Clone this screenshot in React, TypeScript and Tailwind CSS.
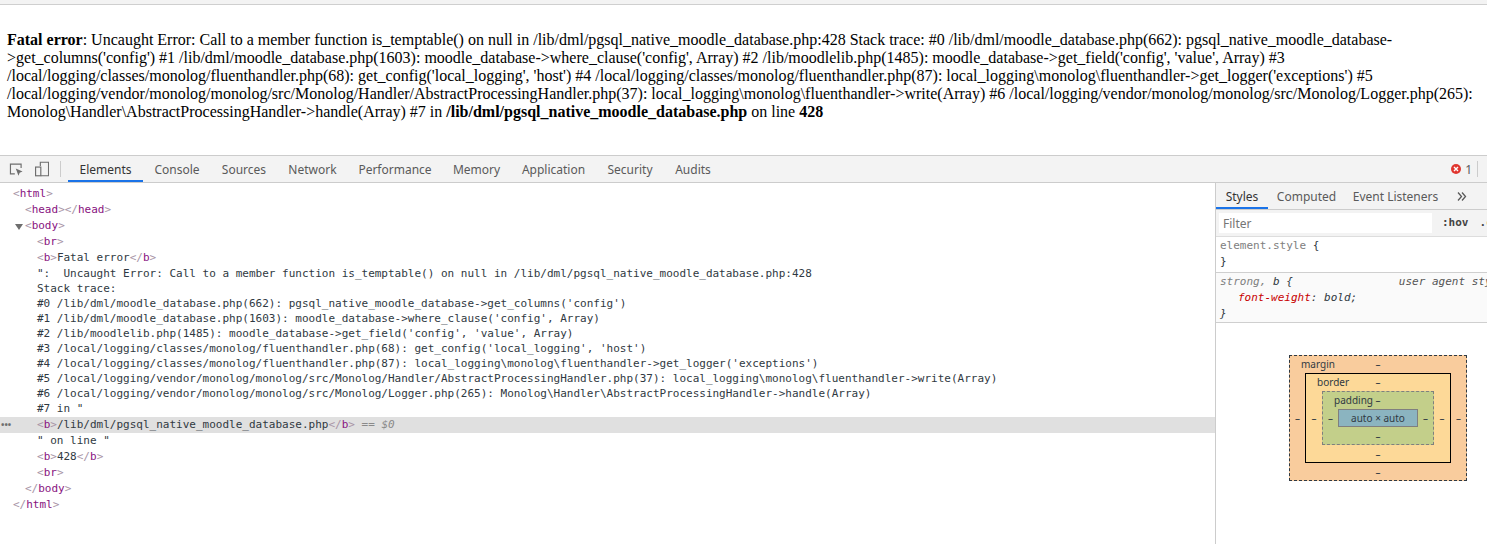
import React from 'react';

const tabs = [
  { name: 'Elements', width: 'w-[75px]', active: true },
  { name: 'Console', width: 'w-[68px]' },
  { name: 'Sources', width: 'w-[66px]' },
  { name: 'Network', width: 'w-[71px]' },
  { name: 'Performance', width: 'w-[94px]' },
  { name: 'Memory', width: 'w-[69px]' },
  { name: 'Application', width: 'w-[85px]' },
  { name: 'Security', width: 'w-[68px]' },
  { name: 'Audits', width: 'w-[58px]' },
];

const stackLines = [
  `":  Uncaught Error: Call to a member function is_temptable() on null in /lib/dml/pgsql_native_moodle_database.php:428`,
  'Stack trace:',
  `#0 /lib/dml/moodle_database.php(662): pgsql_native_moodle_database->get_columns('config')`,
  `#1 /lib/dml/moodle_database.php(1603): moodle_database->where_clause('config', Array)`,
  `#2 /lib/moodlelib.php(1485): moodle_database->get_field('config', 'value', Array)`,
  `#3 /local/logging/classes/monolog/fluenthandler.php(68): get_config('local_logging', 'host')`,
  `#4 /local/logging/classes/monolog/fluenthandler.php(87): local_logging\\monolog\\fluenthandler->get_logger('exceptions')`,
  `#5 /local/logging/vendor/monolog/monolog/src/Monolog/Handler/AbstractProcessingHandler.php(37): local_logging\\monolog\\fluenthandler->write(Array)`,
  `#6 /local/logging/vendor/monolog/monolog/src/Monolog/Logger.php(265): Monolog\\Handler\\AbstractProcessingHandler->handle(Array)`,
  '#7 in "',
];

function Tag({ name, close }: { name: string; close?: boolean }) {
  return (
    <>
      <span className="text-[#a894a6]">{close ? '</' : '<'}</span>
      <span className="text-[#881280]">{name}</span>
      <span className="text-[#a894a6]">{'>'}</span>
    </>
  );
}

function Row({ indent, children }: { indent: string; children: React.ReactNode }) {
  return <div className={`h-4 leading-4 whitespace-pre ${indent}`}>{children}</div>;
}

function Dash() {
  return <span className="text-[#303942]">–</span>;
}

function BoxLayer({ className, label, side, children }: {
  className: string;
  label: string;
  side: string;
  children: React.ReactNode;
}) {
  return (
    <div className={`relative flex flex-col items-center ${className}`}>
      <span className="absolute top-0 left-[11px] leading-[17px]">{label}</span>
      <div className="h-[17px] leading-[17px]"><Dash /></div>
      <div className="flex items-center">
        <div className={`text-center ${side}`}><Dash /></div>
        {children}
        <div className={`text-center ${side}`}><Dash /></div>
      </div>
      <div className="h-[17px] leading-[19px]"><Dash /></div>
    </div>
  );
}

function BoxModel() {
  return (
    <div className="flex justify-center pt-[32px] pl-[53px] font-['Noto_Sans',sans-serif] text-[10px] text-[#303942]">
      <BoxLayer className="border border-dashed border-[#303942] bg-[#f9cc9d]" label="margin" side="w-[15px]">
        <BoxLayer className="border border-black bg-[#fdd998]" label="border" side="w-4">
          <BoxLayer className="border border-dashed border-[#7f7f7f] bg-[#c3cf8a]" label="padding" side="w-[15px]">
            <div className="flex h-[18px] w-[80px] items-center justify-center border border-[#7f7f7f] bg-[#8bb4c0]">
              auto × auto
            </div>
          </BoxLayer>
        </BoxLayer>
      </BoxLayer>
    </div>
  );
}

export default function App() {
  return (
    <div className="flex h-[544px] w-[1487px] flex-col overflow-hidden bg-white">
      <div className="h-[5px] border-b border-[#cfcfcf] bg-[#f3f3f3]" />
      <div className="h-[150px] pt-[26px] pr-2 pl-[7px] font-['Liberation_Serif',serif] text-base leading-[18px] text-black">
        <b>Fatal error</b>: Uncaught Error: Call to a member function is_temptable() on null in
        /lib/dml/pgsql_native_moodle_database.php:428 Stack trace: #0 /lib/dml/moodle_database.php(662):
        pgsql_native_moodle_database-&gt;get_columns('config') #1 /lib/dml/moodle_database.php(1603):
        moodle_database-&gt;where_clause('config', Array) #2 /lib/moodlelib.php(1485):
        moodle_database-&gt;get_field('config', 'value', Array) #3 /local/logging/classes/monolog/fluenthandler.php(68):
        get_config('local_logging', 'host') #4 /local/logging/classes/monolog/fluenthandler.php(87):
        local_logging\monolog\fluenthandler-&gt;get_logger('exceptions') #5
        /local/logging/vendor/monolog/monolog/src/Monolog/Handler/AbstractProcessingHandler.php(37):
        local_logging\monolog\fluenthandler-&gt;write(Array) #6 /local/logging/vendor/monolog/monolog/src/Monolog/Logger.php(265):
        Monolog\Handler\AbstractProcessingHandler-&gt;handle(Array) #7 in{' '}
        <b>/lib/dml/pgsql_native_moodle_database.php</b> on line <b>428</b>
      </div>

      {/* DevTools toolbar */}
      <div className="flex h-[28px] items-stretch border-y border-[#cccccc] bg-[#f3f3f3] font-['Noto_Sans',sans-serif] text-xs text-[#5a5a5a]">
        <div className="flex w-[61px] items-center pl-[9px]">
          <svg width="15" height="15" viewBox="0 0 15 15" fill="none">
            <path d="M6 12H1.5V2H12.5V6" stroke="#6e6e6e" strokeWidth="1.2" />
            <path d="M7 6.5L14 9.5L11 10.8L9.8 14Z" fill="#6e6e6e" />
          </svg>
          <svg className="ml-[11px]" width="15" height="16" viewBox="0 0 15 16" fill="none">
            <path d="M5.5 5V1H14V15H6" stroke="#6e6e6e" strokeWidth="1.2" />
            <rect x="0.6" y="6" width="5.4" height="9" stroke="#6e6e6e" strokeWidth="1.2" />
          </svg>
          <div className="ml-[11px] h-[16px] w-px bg-[#cccccc]" />
        </div>
        <div className="ml-[7px] flex">
          {tabs.map((tab) => (
            <div
              key={tab.name}
              className={`flex items-center justify-center ${tab.width} ${tab.active ? 'border-b-2 border-[#1a73e8] pt-[4px] text-[#333333]' : 'pt-[2px]'}`}
            >
              {tab.name}
            </div>
          ))}
        </div>
        <div className="ml-auto flex items-center pr-[9px]">
          <svg width="10" height="10" viewBox="0 0 10 10">
            <circle cx="5" cy="5" r="5" fill="#e0362f" />
            <path d="M3 3L7 7M7 3L3 7" stroke="white" strokeWidth="1.4" />
          </svg>
          <span className="ml-[4px] pt-[2px]">1</span>
          <div className="ml-[5px] h-[16px] w-px bg-[#cccccc]" />
        </div>
      </div>

      <div className="flex min-h-0 flex-1">
        {/* Elements tree */}
        <div className="relative w-[1215px] pt-[3px] font-['DejaVu_Sans_Mono',monospace] text-[11px] text-[#303942]">
          <Row indent="pl-[13px]"><Tag name="html" /></Row>
          <Row indent="pl-[25px]"><Tag name="head" /><Tag name="head" close /></Row>
          <Row indent="pl-[25px]">
            <span className="absolute left-[15px] mt-[6px] h-0 w-0 border-x-[4px] border-t-[6px] border-x-transparent border-t-[#6e6e6e]" />
            <Tag name="body" />
          </Row>
          <Row indent="pl-[37px]"><Tag name="br" /></Row>
          <Row indent="pl-[37px]"><Tag name="b" />Fatal error<Tag name="b" close /></Row>
          <div className="pl-[37px] leading-[15px] whitespace-pre">
            {stackLines.map((line) => (
              <div key={line} className="h-[15px]">{line}</div>
            ))}
          </div>
          <div className="relative mt-px flex h-4 items-center bg-[#e0e0e0] pl-[37px] leading-4 whitespace-pre">
            <span className="absolute left-[1px] font-['Noto_Sans',sans-serif] text-[9px] font-bold text-[#6e6e6e]">•••</span>
            <Tag name="b" />/lib/dml/pgsql_native_moodle_database.php<Tag name="b" close />
            <span className="text-[#8a8a8a]"> == <i>$0</i></span>
          </div>
          <Row indent="pl-[37px]">" on line "</Row>
          <Row indent="pl-[37px]"><Tag name="b" />428<Tag name="b" close /></Row>
          <Row indent="pl-[37px]"><Tag name="br" /></Row>
          <Row indent="pl-[25px]"><Tag name="body" close /></Row>
          <Row indent="pl-[13px]"><Tag name="html" close /></Row>
        </div>

        {/* Styles sidebar */}
        <div className="w-[272px] overflow-hidden border-l border-[#cccccc]">
          <div className="flex h-[27px] border-b border-[#cccccc] bg-[#f3f3f3] font-['Noto_Sans',sans-serif] text-xs text-[#5a5a5a]">
            <div className="flex w-[52px] items-center justify-center border-b-2 border-[#1a73e8] pt-[4px] text-[#333333]">Styles</div>
            <div className="flex w-[77px] items-center justify-center pt-[2px]">Computed</div>
            <div className="flex w-[101px] items-center justify-center pt-[2px]">Event Listeners</div>
            <div className="flex w-[31px] items-center justify-center">
              <svg width="10" height="9" viewBox="0 0 10 9" fill="none" stroke="#5a5a5a" strokeWidth="1.3">
                <path d="M1 0.5L4.5 4.5L1 8.5" />
                <path d="M5 0.5L8.5 4.5L5 8.5" />
              </svg>
            </div>
          </div>
          <div className="flex h-[27px] items-center border-b border-[#dddddd] bg-[#f3f3f3] pl-[3px] whitespace-nowrap">
            <div className="flex h-5 w-[213px] shrink-0 items-center bg-white pt-[2px] pl-1 font-['Noto_Sans',sans-serif] text-xs text-[#757575]">Filter</div>
            <span className="ml-[10px] font-['DejaVu_Sans_Mono',monospace] text-[11px] font-bold text-[#444444]">:hov</span>
            <span className="ml-[11px] font-['DejaVu_Sans_Mono',monospace] text-[11px] font-bold text-[#444444]">.cls</span>
          </div>
          <div className="h-[36px] border-b border-[#cfcfcf] pt-[1px] pl-[4px] font-['DejaVu_Sans_Mono',monospace] text-[11px] leading-4 text-[#303942]">
            <div><span className="text-[#808080]">element.style</span> {'{'}</div>
            <div>{'}'}</div>
          </div>
          <div className="h-[50px] border-b border-[#cfcfcf] bg-[#fafafa] pt-[1px] pl-[4px] font-['DejaVu_Sans_Mono',monospace] text-[11px] leading-4 whitespace-nowrap text-[#303942] italic">
            <div className="flex">
              <span><span className="text-[#808080]">strong, </span>b {'{'}</span>
              <span className="ml-[106px] text-[#555555]">user agent stylesheet</span>
            </div>
            <div className="pl-[18px]"><span className="text-[#c80000]">font-weight</span>: bold;</div>
            <div>{'}'}</div>
          </div>
          <BoxModel />
        </div>
      </div>
    </div>
  );
}
